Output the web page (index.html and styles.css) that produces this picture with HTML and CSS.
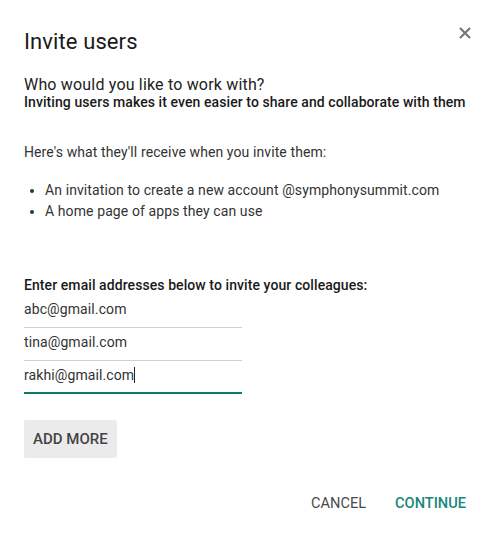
FILE: index.html
```html
<!DOCTYPE html>
<html>
<head>
<meta charset="utf-8">
<link rel="stylesheet" href="styles.css">
</head>
<body>
<div class="dialog">
  <div class="header">
    <h1 class="title">Invite users</h1>
    <button class="close" aria-label="Close">
      <svg width="12" height="12" viewBox="0 0 12 12"><path d="M1 1L11 11M11 1L1 11" stroke="#777" stroke-width="2.2" fill="none"/></svg>
    </button>
  </div>
  <p class="lead">Who would you like to work with?</p>
  <p class="sub">Inviting users makes it even easier to share and collaborate with them</p>
  <p class="text">Here's what they'll receive when you invite them:</p>
  <ul class="list">
    <li>An invitation to create a new account @symphonysummit.com</li>
    <li>A home page of apps they can use</li>
  </ul>
  <p class="label">Enter email addresses below to invite your colleagues:</p>
  <div class="fields">
    <div class="field">abc@gmail.com</div>
    <div class="field">tina@gmail.com</div>
    <div class="field active">rakhi@gmail.com<span class="caret"></span></div>
  </div>
  <button class="add">ADD MORE</button>
  <div class="actions">
    <button class="action cancel">CANCEL</button>
    <button class="action continue">CONTINUE</button>
  </div>
</div>
</body>
</html>
```
FILE: styles.css
```css
* { box-sizing: border-box; }
html, body { margin: 0; padding: 0; background: #fff; }
body {
  font-family: Roboto, "Liberation Sans", Arial, sans-serif;
  color: #222;
  width: 492px;
  height: 537px;
  overflow: hidden;
}
.dialog {
  padding: 28px 26px 0 24px;
}
.header {
  display: flex;
  justify-content: space-between;
  align-items: flex-start;
}
.title {
  margin: 0;
  font-size: 22px;
  line-height: 28px;
  font-weight: 400;
  color: #1a1a1a;
  letter-spacing: 0.1px;
}
.close {
  border: 0;
  background: none;
  padding: 0;
  margin: -1px -5px 0 0;
  width: 12px;
  height: 12px;
  display: flex;
}
.lead {
  margin: 20px 0 0;
  font-size: 16px;
  line-height: 18px;
  color: #222;
  letter-spacing: 0.18px;
}
.sub {
  margin: 0;
  font-size: 14px;
  line-height: 16px;
  font-weight: 500;
  color: #1a1a1a;
  letter-spacing: 0.08px;
  white-space: nowrap;
}
.text {
  margin: 32px 0 0;
  font-size: 14px;
  line-height: 20px;
  color: #333;
  letter-spacing: 0.1px;
}
.list {
  margin: 18px 0 0;
  padding-left: 21px;
  font-size: 14px;
  line-height: 21px;
  color: #333;
  letter-spacing: 0.1px;
}
.label {
  margin: 53px 0 0;
  font-size: 14px;
  line-height: 20px;
  font-weight: 500;
  color: #1a1a1a;
  letter-spacing: 0.08px;
}
.fields {
  width: 218px;
  display: flex;
  flex-direction: column;
}
.field {
  height: 33px;
  padding: 4px 0 0;
  font-size: 14px;
  line-height: 20px;
  color: #333;
  letter-spacing: 0.1px;
  border-bottom: 1px solid #cfcfcf;
}
.field.active {
  border-bottom: 2px solid #0b7a68;
}
.caret {
  display: inline-block;
  width: 1px;
  height: 16px;
  background: #222;
  vertical-align: -3px;
}
.add {
  display: block;
  margin-top: 26px;
  height: 38px;
  padding: 0 9px;
  border: 0;
  border-radius: 2px;
  background: #ebebeb;
  font-family: inherit;
  font-size: 15px;
  font-weight: 500;
  color: #444;
  line-height: 38px;
}
.actions {
  margin-top: 27px;
  display: flex;
  justify-content: flex-end;
  gap: 29px;
}
.action {
  border: 0;
  background: none;
  padding: 0;
  height: 36px;
  line-height: 36px;
  font-family: inherit;
  font-size: 14.6px;
  font-weight: 500;
}
.cancel { color: #4a4a4a; font-weight: 400; }
.continue { color: #16877a; }
```
